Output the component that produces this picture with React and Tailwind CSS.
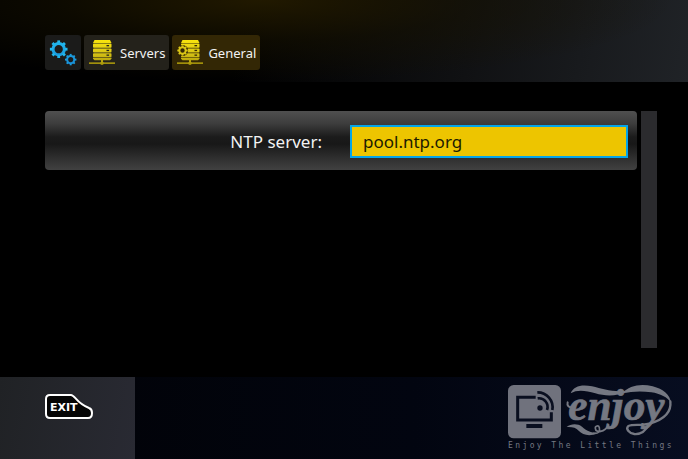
import React from "react";

function Gear({ cx, cy, r, width, teeth, color }) {
  const step = 360 / teeth;
  return (
    <g fill={color}>
      <circle cx={cx} cy={cy} r={r} fill="none" stroke={color} strokeWidth={width} />
      {Array.from({ length: teeth }, (_, i) => (
        <rect
          key={i}
          x={cx - width * 0.45}
          y={cy - r - width}
          width={width * 0.9}
          height={width * 0.9}
          transform={`rotate(${i * step} ${cx} ${cy})`}
        />
      ))}
    </g>
  );
}

function GearsIcon() {
  return (
    <svg className="h-7 w-7" viewBox="0 0 28 28" aria-hidden="true">
      <defs>
        <linearGradient id="blue" x1="0" y1="0" x2="0" y2="28" gradientUnits="userSpaceOnUse">
          <stop offset="0" stopColor="#22bcf0" />
          <stop offset="1" stopColor="#1583d0" />
        </linearGradient>
      </defs>
      <Gear cx={9.7} cy={10.2} r={5.7} width={3.1} teeth={8} color="url(#blue)" />
      <Gear cx={21.7} cy={20.6} r={3.6} width={2.1} teeth={8} color="url(#blue)" />
    </svg>
  );
}

function ServerIcon({ id, gear, back }) {
  const fill = `url(#${id})`;
  return (
    <svg className="h-7 w-7 shrink-0" viewBox="0 0 28 28" aria-hidden="true">
      <defs>
        <linearGradient id={id} x1="0" y1="0" x2="0" y2="28" gradientUnits="userSpaceOnUse">
          <stop offset="0" stopColor="#fbe70c" />
          <stop offset="0.5" stopColor="#d9c516" />
          <stop offset="1" stopColor="#a08e06" />
        </linearGradient>
      </defs>
      <g fill={fill}>
        <path d="M6.5 1H22l1.500 3H5z" />
        <rect x="5" y="4.600" width="18.500" height="4.100" rx="0.800" />
        <rect x="5" y="9.400" width="18.500" height="4.100" rx="0.800" />
        <rect x="5" y="14.200" width="18.500" height="4" rx="0.800" />
        <path d="M5 18.800h18.500v1l-1.500 1.400h-15.500L5 19.800z" />
        <rect x="13" y="21" width="2" height="3" />
        <rect x="1" y="23.400" width="26" height="1.500" />
        <circle cx="14" cy="24.200" r="1.800" />
      </g>
      <g fill={back}>
        <rect x="18.500" y="6" width="2.600" height="1.300" />
        <rect x="18.500" y="10.800" width="2.600" height="1.300" />
        <rect x="18.500" y="15.500" width="2.600" height="1.300" />
      </g>
      {gear && (
        <g>
          <circle cx="6.500" cy="11.500" r="5.600" fill={back} />
          <Gear cx={6.5} cy={11.5} r={3.2} width={2} teeth={8} color="#d9c516" />
        </g>
      )}
    </svg>
  );
}

function Logo() {
  return (
    <div className="flex flex-col text-[#757882]">
      <svg className="h-[54px] w-[166px] overflow-visible" viewBox="24 29 498 162" role="img" aria-label="enjoy">
        <rect x="24" y="29" width="159" height="160" rx="17" fill="#70727d" />
        <g fill="none" stroke="#0a0f20">
          <path d="M107 66H53v68h101v-23" strokeWidth="9" />
          <path d="M112 51a45 45 0 0 1 45 53" strokeWidth="8" />
          <path d="M113 69a26 26 0 0 1 28 35" strokeWidth="8" />
        </g>
        <circle cx="120" cy="98" r="8" fill="#0a0f20" />
        <rect x="79" y="146" width="48" height="12" fill="#0a0f20" />
        <text
          x="205"
          y="135"
          fontSize="130"
          fill="currentColor"
          stroke="currentColor"
          strokeWidth="2"
          className="font-['Liberation_Serif',serif] font-bold italic"
        >
          enjoy
        </text>
        <g fill="currentColor">
          <path d="M212 54C220 32 246 26 276 33c32 8 62 18 100 14-22 17-60 16-90 7-30-9-54-12-74 0z" />
          <path d="M366 54c22-23 55-30 92-21 32 8 52 25 56 51-12-19-33-29-60-33-31-5-58-3-88 3z" />
          <path d="M200 155c12-10 32-12 46-1 14 12 26 18 46 18-22 14-44 6-56-6-8-9-20-12-36-11z" />
        </g>
        <g fill="none" stroke="currentColor" strokeLinecap="round">
          <path d="M511 78c4 34-23 55-60 66-26 8-50 2-66 8-9 8 2 22 18 24 24 2 36-13 44-30" strokeWidth="7" />
          <path d="M280 174c15 2 21-5 18-17-2-8-13-6-12 2 1 16 28 12 40-10" strokeWidth="5" />
          <path d="M203 81c-3 10 4 16 14 15" strokeWidth="6" />
        </g>
      </svg>
      <p className="whitespace-nowrap font-['DejaVu_Sans_Mono',monospace] text-[8px] leading-[14px] tracking-[0.3em]">
        Enjoy The Little Things
      </p>
    </div>
  );
}

export default function App() {
  return (
    <div className="flex min-h-screen flex-col bg-black font-['Noto_Sans','Open_Sans',sans-serif] text-[#f2f2f2]">
      <header className="bg-[radial-gradient(ellipse_60%_100%_at_38%_0%,#211900_0%,#17120088_50%,transparent_100%),linear-gradient(100deg,#000_35%,#101113_68%,#202327_100%)] px-[45px] pt-[35px] pb-3">
        <nav aria-label="Breadcrumb" className="flex h-[35px] gap-[3px] text-[13px]">
          <button aria-label="Settings" className="flex w-9 items-center justify-center rounded-[3px] bg-[#1b1b1a]">
            <GearsIcon />
          </button>
          <button className="flex items-center gap-1 rounded-[3px] bg-[#24221b] px-1">
            <ServerIcon id="servers" back="#24221b" />
            <span className="pt-[2px]">Servers</span>
          </button>
          <button aria-current="page" className="flex items-center gap-1 rounded-[3px] bg-[#332705] px-1">
            <ServerIcon id="general" gear back="#332705" />
            <span className="pt-[2px]">General</span>
          </button>
        </nav>
      </header>

      <main className="flex flex-1 items-stretch gap-1 py-[29px] pr-[31px] pl-[45px]">
        <form className="flex-1">
          <div className="flex items-center gap-7 rounded-[4px] bg-[linear-gradient(180deg,#505050_0%,#3c3c3c_22%,#1b1b1b_44%,#181818_56%,#2d2d2d_78%,#414141_100%)] pt-[14px] pr-[9px] pb-3 text-[17px]">
            <label htmlFor="ntp" className="flex-1 text-right">
              NTP server:
            </label>
            <input
              id="ntp"
              type="text"
              defaultValue="pool.ntp.org"
              className="h-[33px] w-[278px] max-w-[48%] border-2 border-[#05a5e8] bg-[#edc500] px-[11px] text-[#201b00] outline-none"
            />
          </div>
        </form>
        <div className="w-4 bg-[#2b2b2e]" />
      </main>

      <footer className="flex h-[82px] bg-[linear-gradient(90deg,#010206_0%,#020510_60%,#070d20_100%)]">
        <div className="w-[135px] bg-[linear-gradient(100deg,#202225,#292a33)] pt-4 pl-11">
          <button aria-label="Exit" className="grid">
            <svg className="col-start-1 row-start-1 h-[27px] w-[50px]" viewBox="0 0 50 27" aria-hidden="true">
              <path
                d="M6 2h21c4 0 5 8 18 13 3 1 3 3 3 5 0 3-1 5-4 5H6c-3 0-4-1-4-4V6c0-3 1-4 4-4z"
                fill="#050505"
                stroke="#fff"
                strokeWidth="2"
              />
            </svg>
            <span className="col-start-1 row-start-1 self-center pt-px pl-[6px] text-left font-['DejaVu_Sans',sans-serif] text-[11px] leading-none font-bold text-white">
              EXIT
            </span>
          </button>
        </div>
        <div className="flex flex-1 justify-end pt-2 pr-[14px]">
          <Logo />
        </div>
      </footer>
    </div>
  );
}
